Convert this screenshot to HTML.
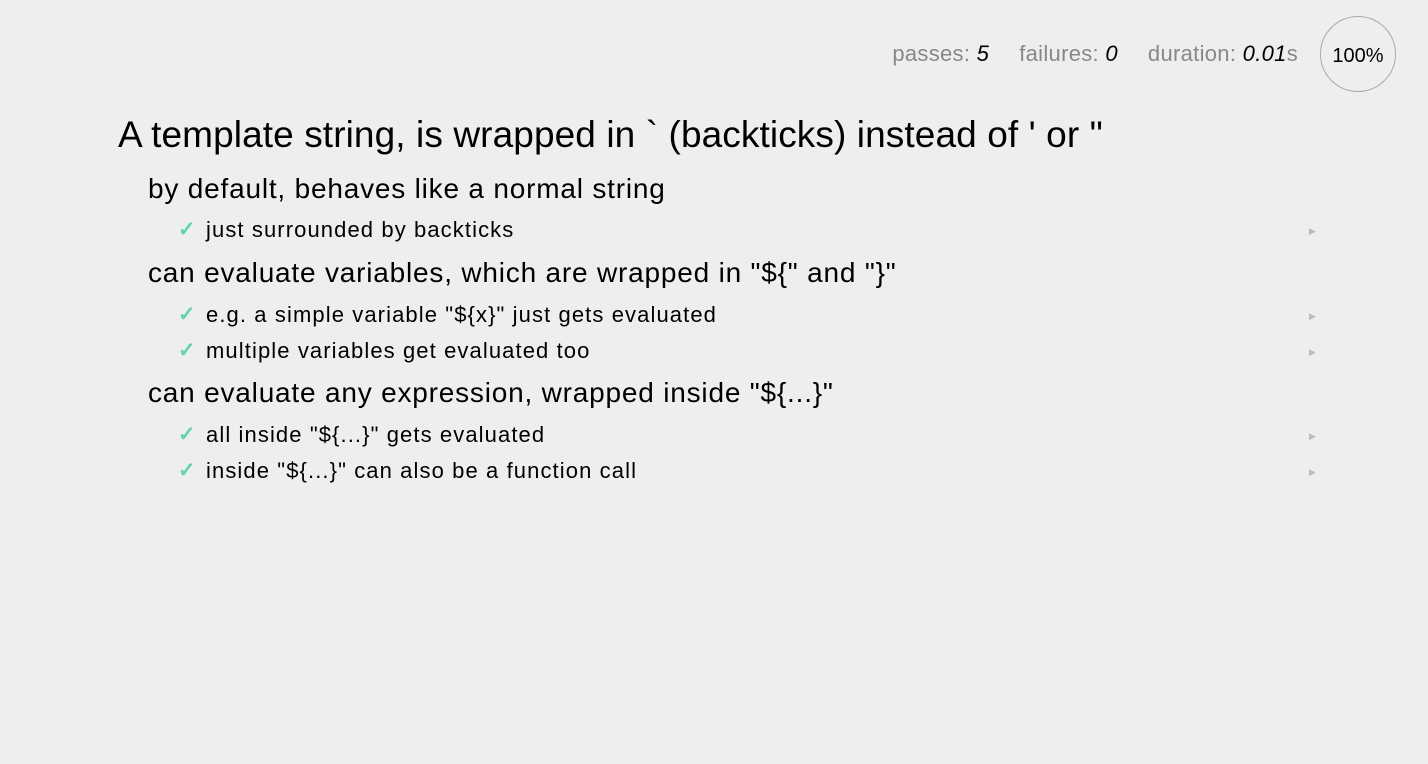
<!DOCTYPE html>
<html><head><meta charset="utf-8"><style>
body{margin:0;background:#eee;font-family:"Liberation Sans",Arial,sans-serif;width:1428px;height:764px;overflow:hidden;position:relative;color:#000}
.a{position:absolute;white-space:nowrap}
.h1{font-size:37px;left:118px;top:114px;letter-spacing:0.1px}
.h2{font-size:28px;left:148px;letter-spacing:0.8px}
.t{font-size:22px;left:206px;color:#000;letter-spacing:1.1px}
.c{font-size:21px;left:178px;color:#5fd3b3;font-weight:bold}
.arr{left:1309px;font-size:9px;color:#bbb}
#stats{right:130px;top:41px;font-size:22px;color:#888;letter-spacing:0.3px}
#stats em{color:#000}
#stats span{margin-left:30px}
.circ{position:absolute;left:1320px;top:16px;width:76px;height:76px;border:1.5px solid #aaa;border-radius:50%;box-sizing:border-box;text-align:center;line-height:78px;font-size:20px}
</style></head><body>
<div class="a" id="stats">passes: <em>5</em><span>failures: <em>0</em></span><span>duration: <em>0.01</em>s</span></div>
<div class="circ">100%</div>
<div class="a h1">A template string, is wrapped in ` (backticks) instead of ' or "</div>
<div class="a h2" style="top:173px">by default, behaves like a normal string</div>
<div class="a c" style="top:217px">✓</div><div class="a t" style="top:217px">just surrounded by backticks</div><div class="a arr" style="top:226px">▶</div>
<div class="a h2" style="top:257px">can evaluate variables, which are wrapped in "${" and "}"</div>
<div class="a c" style="top:302px">✓</div><div class="a t" style="top:302px">e.g. a simple variable "${x}" just gets evaluated</div><div class="a arr" style="top:311px">▶</div>
<div class="a c" style="top:338px">✓</div><div class="a t" style="top:338px">multiple variables get evaluated too</div><div class="a arr" style="top:347px">▶</div>
<div class="a h2" style="top:377px">can evaluate any expression, wrapped inside "${...}"</div>
<div class="a c" style="top:422px">✓</div><div class="a t" style="top:422px">all inside "${...}" gets evaluated</div><div class="a arr" style="top:431px">▶</div>
<div class="a c" style="top:458px">✓</div><div class="a t" style="top:458px">inside "${...}" can also be a function call</div><div class="a arr" style="top:467px">▶</div>
</body></html>
